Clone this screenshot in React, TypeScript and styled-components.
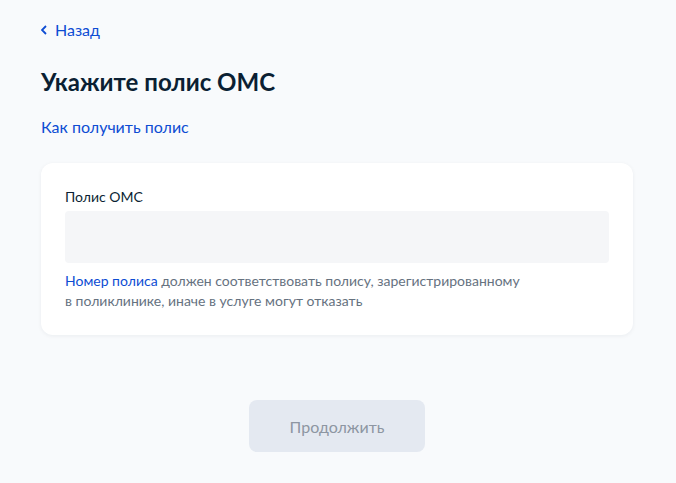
import React from "react";
import styled, { createGlobalStyle } from "styled-components";

const GlobalStyle = createGlobalStyle`
  html, body {
    margin: 0;
    padding: 0;
    background: #f8fafc;
    font-family: Lato, "Noto Sans", sans-serif;
    color: #0b1f33;
  }
`;

const Page = styled.div`
  width: 676px;
  min-height: 483px;
  box-sizing: border-box;
  padding: 19px 43px 0 41px;
  display: flex;
  flex-direction: column;
`;

const BackLink = styled.a`
  display: flex;
  align-items: center;
  gap: 7px;
  color: #0d4cd3;
  font-size: 16px;
  line-height: 22px;
  text-decoration: none;
  cursor: pointer;
`;

const Title = styled.h1`
  margin: 25px 0 0;
  font-size: 24px;
  line-height: 32px;
  font-weight: 700;
  color: #0b1f33;
`;

const InfoLink = styled.a`
  margin-top: 18px;
  color: #0d4cd3;
  font-size: 16px;
  line-height: 22px;
  text-decoration: none;
`;

const Card = styled.div`
  margin-top: 25px;
  background: #fff;
  border-radius: 12px;
  box-shadow: 0 1px 4px rgba(11, 31, 51, 0.06);
  padding: 24px 24px 24px;
`;

const Label = styled.label`
  display: block;
  font-size: 14px;
  line-height: 20px;
  color: #0b1f33;
  margin-bottom: 4px;
`;

const Input = styled.div`
  height: 52px;
  border-radius: 4px;
  background: #f5f6f8;
`;

const Hint = styled.p`
  margin: 8px 0 0;
  font-size: 14px;
  line-height: 20px;
  color: #66727f;
`;

const HintLink = styled.span`
  color: #0d4cd3;
`;

const Footer = styled.div`
  display: flex;
  justify-content: center;
  margin-top: 65px;
`;

const Button = styled.button`
  width: 176px;
  height: 52px;
  border: none;
  border-radius: 8px;
  background: #e4e9f1;
  color: #8d96a2;
  font-family: inherit;
  font-size: 16px;
`;

const Chevron = () => (
  <svg width="7" height="10" viewBox="0 0 7 10" fill="none">
    <path d="M5 1L1 5l4 4" stroke="#0d4cd3" strokeWidth="1.8" />
  </svg>
);

export default function App() {
  return (
    <>
      <GlobalStyle />
      <Page>
        <BackLink>
          <Chevron />
          Назад
        </BackLink>
        <Title>Укажите полис ОМС</Title>
        <InfoLink>Как получить полис</InfoLink>
        <Card>
          <Label>Полис ОМС</Label>
          <Input />
          <Hint>
            <HintLink>Номер полиса</HintLink> должен соответствовать полису, зарегистрированному
            <br />в поликлинике, иначе в услуге могут отказать
          </Hint>
        </Card>
        <Footer>
          <Button disabled>Продолжить</Button>
        </Footer>
      </Page>
    </>
  );
}
